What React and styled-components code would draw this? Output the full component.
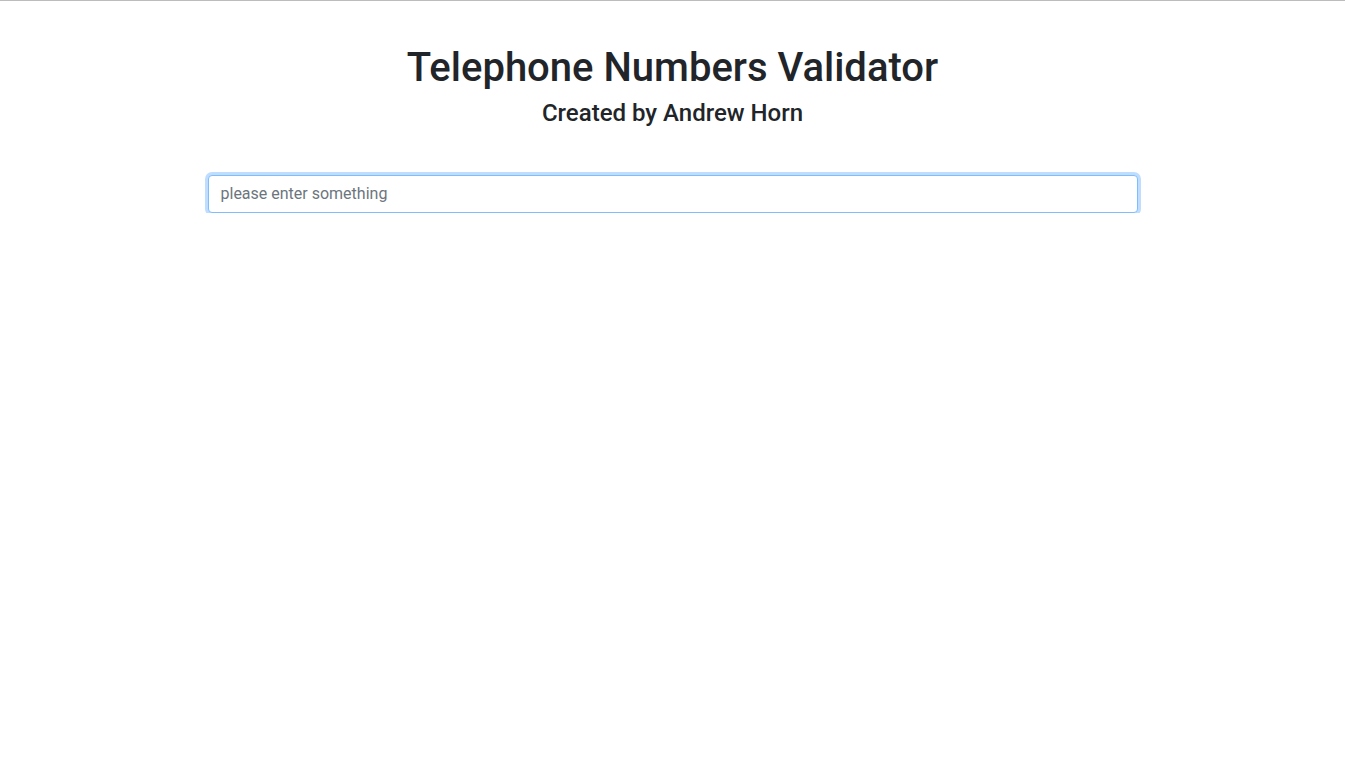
import React from 'react'
import styled, { createGlobalStyle } from 'styled-components'

const GlobalStyle = createGlobalStyle`
  *, *::before, *::after { box-sizing: border-box; }
  html, body { margin: 0; padding: 0; }
  body {
    font-family: Roboto, "Helvetica Neue", Arial, sans-serif;
    font-size: 16px;
    line-height: 1.5;
    color: #212529;
    background: #fff;
    border-top: 1px solid #bcbcbc;
  }
`

const Container = styled.div`
  width: 960px;
  margin: 0 auto;
  padding: 0 15px;
`

const Header = styled.header`
  text-align: center;
  padding-top: 43px;
  margin-bottom: 47px;
`

const Title = styled.h1`
  margin: 0 0 7px;
  font-size: 40px;
  font-weight: 500;
  line-height: 1.2;
`

const Subtitle = styled.h4`
  margin: 0;
  font-size: 24px;
  font-weight: 500;
  line-height: 1.2;
`

const Input = styled.input`
  display: block;
  width: 100%;
  height: 38px;
  padding: 6px 12px;
  font-family: inherit;
  font-size: 16px;
  line-height: 1.5;
  color: #495057;
  background: #fff;
  border: 1px solid #80bdff;
  border-radius: 4px;
  outline: 0;
  box-shadow: 0 0 0 3px rgba(0, 123, 255, 0.25);

  &::placeholder {
    color: #6c757d;
    opacity: 1;
  }
`

export default function App() {
  return (
    <>
      <GlobalStyle />
      <Container>
        <Header>
          <Title>Telephone Numbers Validator</Title>
          <Subtitle>Created by Andrew Horn</Subtitle>
        </Header>
        <Input placeholder="please enter something" autoFocus />
      </Container>
    </>
  )
}
